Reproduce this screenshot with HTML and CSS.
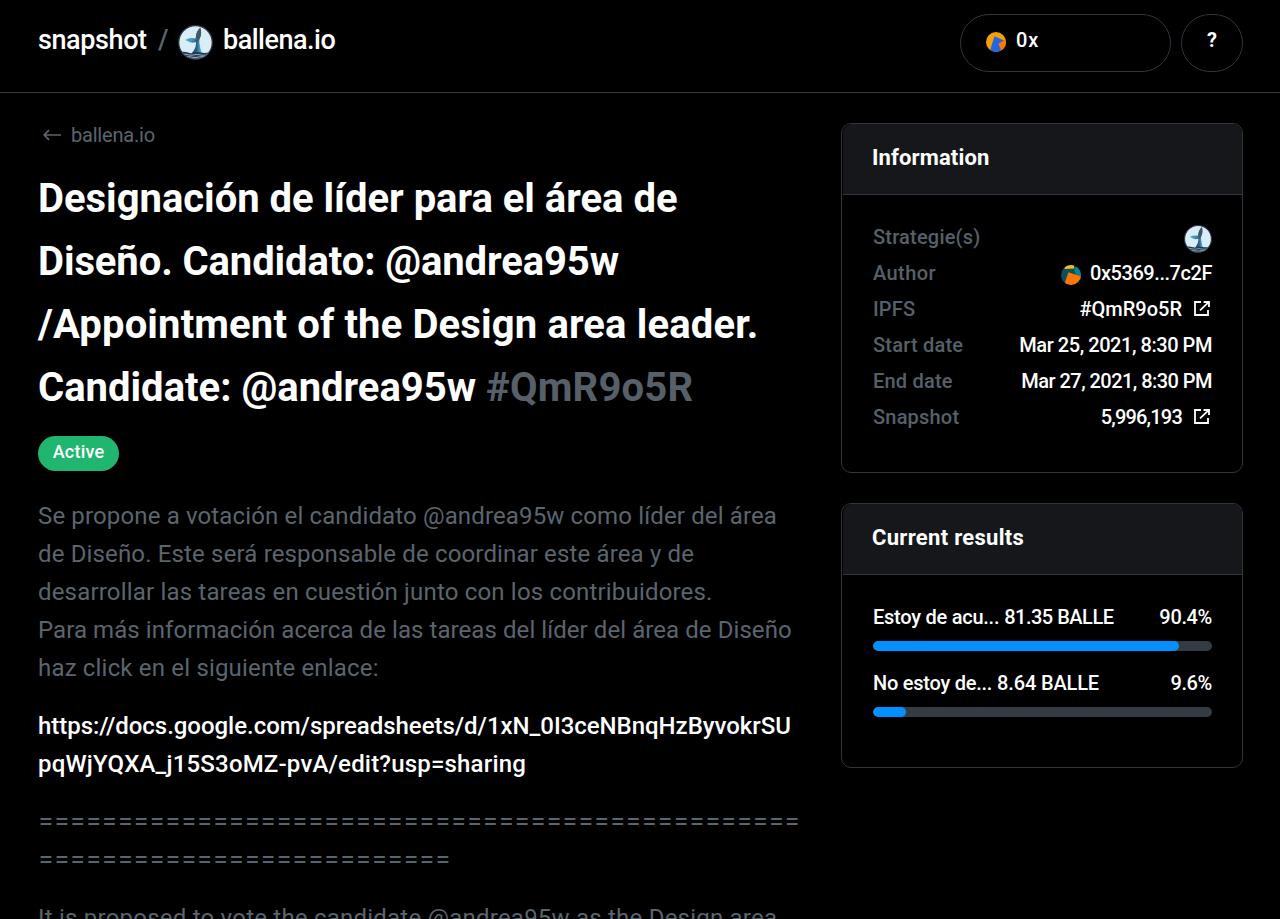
FILE: index.html
```html
<!DOCTYPE html>
<html lang="es">
<head>
<meta charset="utf-8">
<title>ballena.io – Snapshot</title>
<link rel="stylesheet" href="styles.css">
</head>
<body>
<svg class="defs" width="0" height="0" aria-hidden="true">
  <defs>
    <linearGradient id="tail" x1="0" y1="0" x2="1" y2="0.2">
      <stop offset="0" stop-color="#45b4e6"/><stop offset="0.6" stop-color="#4590b8"/><stop offset="1" stop-color="#35506a"/>
    </linearGradient>
    <linearGradient id="trunk" x1="0" y1="0" x2="1" y2="0">
      <stop offset="0" stop-color="#24364c"/><stop offset="0.5" stop-color="#2c6288"/><stop offset="1" stop-color="#62c4ec"/>
    </linearGradient>
    <clipPath id="round"><circle cx="10" cy="10" r="10"/></clipPath>
    <clipPath id="sea"><circle cx="17.5" cy="17.5" r="16.2"/></clipPath>
  </defs>
  <symbol id="whale" viewBox="0 0 35 35">
    <circle cx="17.5" cy="17.5" r="16.8" fill="#d9edf7" stroke="#2a3648" stroke-width="1.3"/>
    <path d="M17.800 15C17.500 9.500 19 5.500 22.300 2.600C23.500 6.500 23.600 10.500 21.300 14.600C21.300 19.500 22.200 23.500 23.800 28H14C17.400 24 18.600 20 17.800 15z" fill="url(#trunk)"/>
    <path d="M17.800 13.500C18.200 8.500 19.500 5.300 22.300 2.600C23.500 6.500 23.600 10.500 21.300 14.600L18.600 17z" fill="#435468"/>
    <path d="M7.500 15C10.500 12.800 15 12.800 18.300 13.600L20.600 15.200C17.500 18.200 12.500 18.200 10.800 16.600C9.600 16.200 8.800 15.900 7.500 15z" fill="url(#tail)"/>
    <g clip-path="url(#sea)">
      <path d="M0 27.800c4-1.200 7-1.200 10-.2s5 .5 8-.3 6 .8 9 .6 5-.8 9-.8V36H0z" fill="#26374d"/>
      <path d="M4 29.500c4-1 6 .7 9 .7s5-1.200 8-.5 5 .9 10-.1M8 32c4-1 6 .6 9 .5s5-1.200 10-.8" fill="none" stroke="#b9d0df" stroke-width=".8"/>
    </g>
  </symbol>
  <symbol id="external" viewBox="0 0 16 15">
    <path d="M7 1H1v13h13V9" fill="none" stroke="currentColor" stroke-width="1.8"/>
    <path d="M6 9.300L14.200 1.600M9.600 1H15v5" fill="none" stroke="currentColor" stroke-width="1.8"/>
  </symbol>
</svg>

<header class="topbar">
  <div class="brand">
    <a class="brand-name">snapshot</a>
    <span class="slash">/</span>
    <svg class="brand-logo"><use href="#whale"/></svg>
    <a class="space-name">ballena.io</a>
  </div>
  <div class="actions">
    <button class="pill account">
      <svg class="avatar" viewBox="0 0 20 20"><g clip-path="url(#round)"><path fill="#f3a009" d="M0 0h20v20H0z"/><path fill="#ff7800" d="M11 11l9-4v13h-6z"/><path fill="#2465e0" d="M8.500 4.300L18 8.500l-5.700 3.200L16 20H3.500z"/></g></svg>
      <span>0x</span>
    </button>
    <button class="pill help">?</button>
  </div>
</header>

<div class="page">
  <main class="proposal">
    <a class="back">
      <svg class="back-arrow" viewBox="0 0 18 12"><path d="M18 6H1.200M6 1.200L1.200 6 6 10.800" fill="none" stroke="currentColor" stroke-width="1.700"/></svg>
      <span>ballena.io</span>
    </a>
    <h1 class="title">
      <span class="line t1">Designación de líder para el área de</span>
      <span class="line t2">Diseño. Candidato: @andrea95w</span>
      <span class="line t3">/Appointment of the Design area leader.</span>
      <span class="line">Candidate: @andrea95w <span class="hash">#QmR9o5R</span></span>
    </h1>
    <span class="state">Active</span>
    <div class="body">
      <p>
        <span class="line b1">Se propone a votación el candidato @andrea95w como líder del área</span>
        <span class="line b2">de Diseño. Este será responsable de coordinar este área y de</span>
        <span class="line b3">desarrollar las tareas en cuestión junto con los contribuidores.</span>
        <span class="line b4">Para más información acerca de las tareas del líder del área de Diseño</span>
        <span class="line b3">haz click en el siguiente enlace:</span>
      </p>
      <p class="link">
        <span class="line l1">https://docs.google.com/spreadsheets/d/1xN_0I3ceNBnqHzByvokrSU</span>
        <span class="line b3">pqWjYQXA_j15S3oMZ-pvA/edit?usp=sharing</span>
      </p>
      <p class="rule">
        <span class="line">================================================</span>
        <span class="line">==========================</span>
      </p>
      <p><span class="line b5">It is proposed to vote the candidate @andrea95w as the Design area</span></p>
    </div>
  </main>

  <aside class="side">
    <section class="card info">
      <h2 class="card-title">Information</h2>
      <div class="card-body">
        <div class="row"><b>Strategie(s)</b><svg class="strategy"><use href="#whale"/></svg></div>
        <div class="row"><b class="wide">Author</b><span class="value author"><svg class="avatar" viewBox="0 0 20 20"><g clip-path="url(#round)"><path fill="#07505f" d="M0 0h20v20H0z"/><path fill="#078489" d="M13 3l7-3v14l-5-4z"/><path fill="#f5bf0a" d="M4 0h9v3.600L3.500 4z"/><path fill="#ff7500" d="M7.500 7.300L20 11.500V20H3z"/></g></svg><span>0x5369...7c2F</span></span></div>
        <div class="row"><b>IPFS</b><span class="value">#QmR9o5R<svg class="ext"><use href="#external"/></svg></span></div>
        <div class="row"><b>Start date</b><span class="value date">Mar 25, 2021, 8:30 PM</span></div>
        <div class="row"><b>End date</b><span class="value date end">Mar 27, 2021, 8:30 PM</span></div>
        <div class="row"><b>Snapshot</b><span class="value"><span class="block">5,996,193</span><svg class="ext"><use href="#external"/></svg></span></div>
      </div>
    </section>

    <section class="card results">
      <h2 class="card-title current">Current results</h2>
      <div class="card-body">
        <div class="row choice"><span><span class="name">Estoy de acu...</span> <span class="score">81.35 BALLE</span></span><span class="percent">90.4%</span></div>
        <div class="bar"><div class="fill" style="width:90.4%"></div></div>
        <div class="row choice"><span><span class="name">No estoy de...</span> <span class="second">8.64 BALLE</span></span><span class="percent">9.6%</span></div>
        <div class="bar"><div class="fill" style="width:9.6%"></div></div>
      </div>
    </section>
  </aside>
</div>
</body>
</html>
```
FILE: styles.css
```css
* { box-sizing: border-box; }

body {
  margin: 0;
  height: 919px;
  overflow: hidden;
  background: #000;
  color: #fff;
  font: 500 20px/36px Roboto, sans-serif;
}

svg { display: block; flex: none; }
.defs { position: absolute; }
.line { display: block; white-space: nowrap; }

/* Top bar */
.topbar {
  height: 93px;
  display: flex;
  justify-content: space-between;
  align-items: flex-start;
  padding: 0 37px 0 38px;
  border-bottom: 1px solid #343b42;
}
.brand { display: flex; align-items: center; height: 80px; font-size: 27px; }
.brand-name { width: 110px; letter-spacing: -.4px; }
.slash { width: 30px; padding-left: 10px; color: #5b656e; }
.brand-logo { width: 35px; height: 35px; margin-top: 5px; }
.space-name { margin-left: 10px; letter-spacing: -.5px; }
.actions { display: flex; gap: 10px; padding-top: 14px; }
.pill {
  height: 58px;
  display: flex;
  align-items: center;
  padding: 0 0 6px;
  background: transparent;
  border: 1px solid #30363d;
  border-radius: 29px;
  color: #fff;
  font: inherit;
}
.account { width: 211px; padding-left: 25px; gap: 10px; }
.account span { letter-spacing: .8px; }
.avatar { width: 20px; height: 20px; margin-top: 4px; }
.help { width: 62px; justify-content: center; font-weight: 700; }

/* Layout */
.page {
  display: flex;
  justify-content: space-between;
  align-items: flex-start;
  padding: 0 37px 0 38px;
}
.proposal { width: 764px; padding-top: 24px; }
.side { width: 402px; padding-top: 30px; display: flex; flex-direction: column; gap: 30px; }

/* Proposal */
.back {
  display: flex;
  align-items: center;
  gap: 10px;
  padding-left: 5px;
  color: #5b656e;
  font-weight: 400;
  letter-spacing: -.2px;
}
.back-arrow { width: 18px; height: 12px; }
.title { margin: 14px 0 17px; font-size: 40px; line-height: 63px; font-weight: 700; }
.t1 { letter-spacing: -.02px; }
.t2 { letter-spacing: -.1px; }
.t3 { letter-spacing: .14px; }
.hash { color: #576069; letter-spacing: .2px; }
.state {
  display: block;
  width: 81px;
  height: 35px;
  border-radius: 18px;
  background: #21b66f;
  font-size: 18px;
  line-height: 31px;
  text-align: center;
  letter-spacing: .2px;
}
.body { margin-top: 26px; color: #5b656e; font-size: 24px; font-weight: 400; line-height: 38px; }
.body p { margin: 0 0 20px; }
.body .link { color: #fff; font-weight: 500; }
.b1 { letter-spacing: .14px; }
.b2 { letter-spacing: .15px; }
.b3 { letter-spacing: .18px; }
.b4 { letter-spacing: .07px; }
.b5 { letter-spacing: .22px; }
.l1 { letter-spacing: -.03px; }
.body .rule { margin: -22px 0 22px; padding-top: 20px; font-family: Inter, sans-serif; }

/* Cards */
.card { border: 1px solid #30363d; border-radius: 10px; overflow: hidden; }
.info { height: 350px; }
.results { height: 265px; }
.card-title {
  margin: 0 0 0 1px;
  height: 71px;
  padding-left: 29px;
  background: #15171a;
  border-bottom: 1px solid #30363d;
  border-top-left-radius: 9px;
  font-size: 22px;
  line-height: 67px;
  font-weight: 700;
  letter-spacing: .13px;
}
.current { letter-spacing: .3px; }
.card-body { padding: 24px 30px 0 31px; }
.row { height: 36px; display: flex; justify-content: space-between; }
.row b { color: #576069; font-weight: 500; letter-spacing: .2px; }
.row .wide { letter-spacing: .4px; }
.strategy { width: 28px; height: 28px; margin-top: 6px; }
.value { display: flex; align-items: center; }
.author { gap: 9px; letter-spacing: -.45px; }
.date { letter-spacing: -.44px; }
.end { letter-spacing: -.54px; }
.block { letter-spacing: -.8px; }
.ext { width: 16px; height: 15px; margin: -1px 2px 0 12px; }

.choice .name { letter-spacing: -.25px; }
.choice .score { letter-spacing: -.5px; }
.choice .second { letter-spacing: -.15px; }
.choice .percent { letter-spacing: -.35px; }
.bar { height: 10px; margin: 6px 0 14px; border-radius: 5px; background: #343b43; overflow: hidden; }
.fill { height: 100%; border-radius: 5px; background: #0090ff; }
```
